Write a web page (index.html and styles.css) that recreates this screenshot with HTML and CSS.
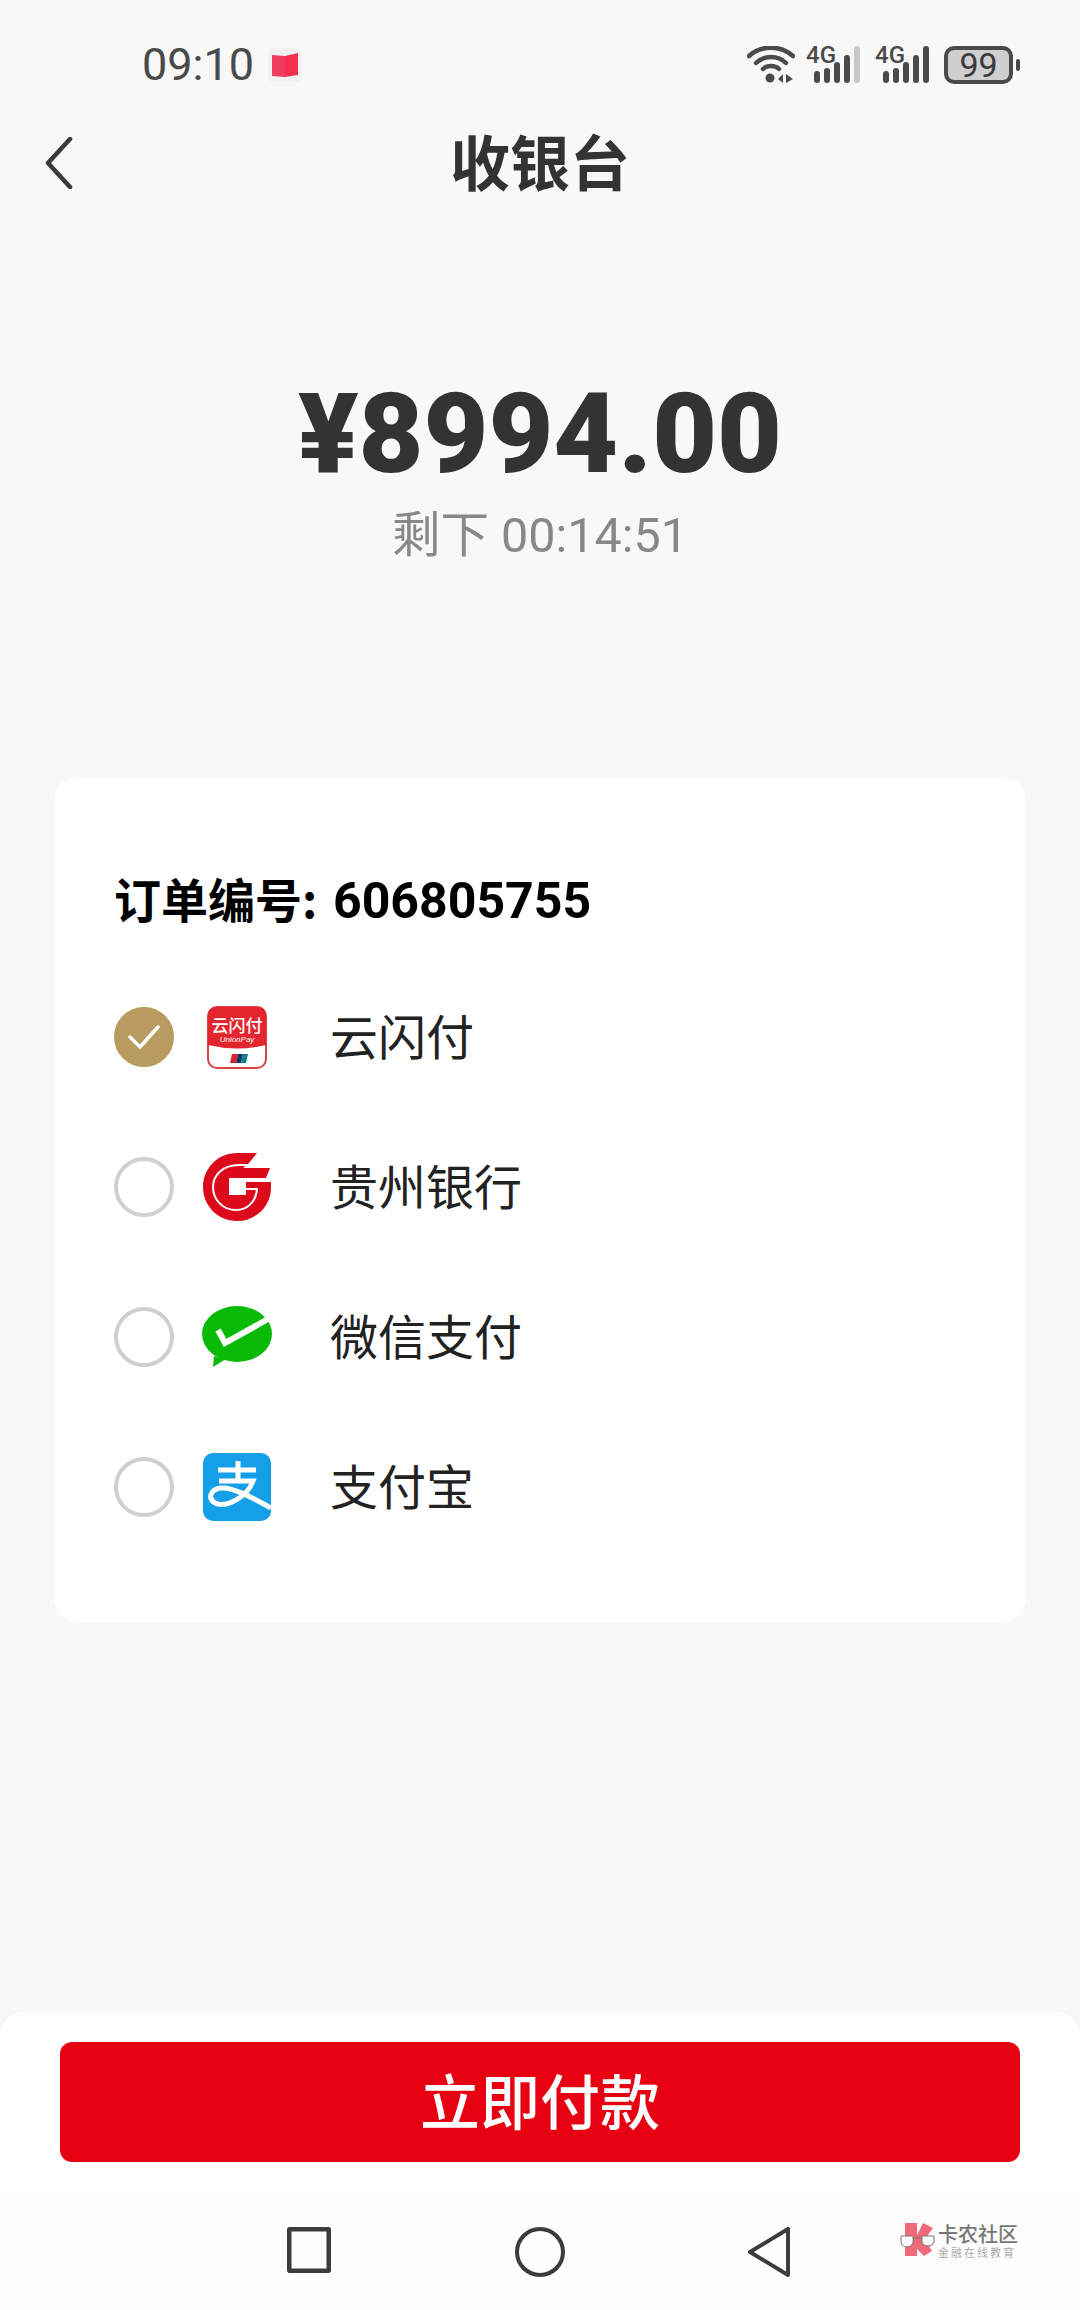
FILE: index.html
```html
<!DOCTYPE html>
<html lang="zh-CN">
<head>
    <meta charset="UTF-8">
    <title>收银台</title>
    <link rel="stylesheet" href="styles.css">
</head>
<body>
<!-- 状态栏 -->
<div class="status-bar">
    <div class="status-left">
        <span class="time">09:10</span>
        <span class="app-badge">
            <svg width="26" height="24" viewBox="0 0 26 24"><path d="M0 2 L13 3 V24 L0 23Z" fill="#ee3c5c"/><path d="M13 3 L26 0 V22 L13 24Z" fill="#f5304f"/></svg>
        </span>
    </div>
    <div class="status-right">
        <svg class="ic-wifi" width="48" height="38" viewBox="0 0 48 38">
            <path d="M2 10 C14 -1 34 -1 46 10" fill="none" stroke="#4a4a4a" stroke-width="4.5" stroke-linecap="round"/>
            <path d="M9 17 C17 9 31 9 39 17" fill="none" stroke="#4a4a4a" stroke-width="4.5" stroke-linecap="round"/>
            <path d="M16 23 C20 19 28 19 32 23" fill="none" stroke="#4a4a4a" stroke-width="4.5" stroke-linecap="round"/>
            <circle cx="23" cy="32" r="4.5" fill="#4a4a4a"/>
            <path d="M36 28 V37 L31 33Z M39 28 V37 L46 33Z" fill="#4a4a4a"/>
        </svg>
        <svg class="ic-signal" width="54" height="50" viewBox="0 -6 54 50">
            <text x="0" y="17" class="sig-text">4G</text>
            <rect x="8" y="25" width="6" height="12" rx="3" fill="#4a4a4a"/>
            <rect x="18" y="22" width="6" height="15" rx="3" fill="#4a4a4a"/>
            <rect x="28" y="16" width="6" height="21" rx="3" fill="#4a4a4a"/>
            <rect x="38" y="9" width="6" height="28" rx="3" fill="#4a4a4a"/>
            <rect x="48" y="0" width="6" height="37" rx="3" fill="#c8c8c8"/>
        </svg>
        <svg class="ic-signal" width="54" height="50" viewBox="0 -6 54 50">
            <text x="0" y="17" class="sig-text">4G</text>
            <rect x="8" y="25" width="6" height="12" rx="3" fill="#4a4a4a"/>
            <rect x="18" y="22" width="6" height="15" rx="3" fill="#4a4a4a"/>
            <rect x="28" y="16" width="6" height="21" rx="3" fill="#4a4a4a"/>
            <rect x="38" y="9" width="6" height="28" rx="3" fill="#4a4a4a"/>
            <rect x="48" y="0" width="6" height="37" rx="3" fill="#4a4a4a"/>
        </svg>
        <div class="battery">
            <div class="battery-body">99</div>
            <div class="battery-nub"></div>
        </div>
    </div>
</div>

<!-- 标题 -->
<div class="header">
    <svg class="back" width="28" height="52" viewBox="0 0 28 52"><path d="M25 2 L3 26 L25 50" fill="none" stroke="#3a3a3a" stroke-width="4.5" stroke-linecap="round" stroke-linejoin="round"/></svg>
    <h1 class="title">收银台</h1>
</div>

<!-- 金额 -->
<div class="amount">¥8994.00</div>
<div class="remain">剩下 00:14:51</div>

<!-- 支付方式 -->
<div class="card">
    <div class="order-no">订单编号: <span class="order-num">606805755</span></div>

    <div class="pay-row">
        <span class="radio checked">
            <svg width="32" height="26" viewBox="0 0 32 26"><path d="M2 13 L12 23 L30 3" fill="none" stroke="#fff" stroke-width="3.5" stroke-linecap="round" stroke-linejoin="round"/></svg>
        </span>
        <span class="pay-icon">
            <svg width="60" height="63" viewBox="0 0 60 63">
                <rect x="1" y="1" width="58" height="61" rx="9" fill="#fff" stroke="#d9434b" stroke-width="2"/>
                <path d="M1 10 Q1 1 10 1 H50 Q59 1 59 10 V39 Q30 46 1 39Z" fill="#e4252d"/>
                <text x="30" y="26" class="up-name">云闪付</text>
                <text x="30" y="36" class="up-sub">UnionPay</text>
                <path d="M25 48 H31 L29 57 H23Z" fill="#d9232e"/>
                <path d="M31 48 H36 L34 57 H29Z" fill="#14336b"/>
                <path d="M36 48 H41 L39 57 H34Z" fill="#0f7f8c"/>
            </svg>
        </span>
        <span class="pay-name">云闪付</span>
    </div>

    <div class="pay-row">
        <span class="radio"></span>
        <span class="pay-icon">
            <svg width="68" height="68" viewBox="0 0 68 68">
                <path d="M54 0 L46 10 L40 15 H67 L63 25 H43 V29 H68 V35 C68 53 53 68 34 68 C15 68 0 53 0 34 C0 15 15 0 34 0Z" fill="#dd0a1c"/>
                <path d="M26 25 H63 L62 29 H43 V42 H26Z" fill="#fff"/>
                <path d="M47 12 H36 C20 12 10 22 10 34 C10 47 20 57 33 57 C44 57 53 49 54 36 H43" fill="none" stroke="#fff" stroke-width="2"/>
            </svg>
        </span>
        <span class="pay-name">贵州银行</span>
    </div>

    <div class="pay-row">
        <span class="radio"></span>
        <span class="pay-icon">
            <svg width="70" height="62" viewBox="0 0 70 62">
                <ellipse cx="35" cy="28" rx="35" ry="28" fill="#09bb07"/>
                <path d="M12 50 L11 61 L24 53Z" fill="#09bb07"/>
                <path d="M16 24 L23 37 L66 13" fill="none" stroke="#fff" stroke-width="6" stroke-linejoin="miter"/>
            </svg>
        </span>
        <span class="pay-name">微信支付</span>
    </div>

    <div class="pay-row">
        <span class="radio"></span>
        <span class="pay-icon">
            <svg width="68" height="68" viewBox="0 0 68 68">
                <rect width="68" height="68" rx="10" fill="#149fe8"/>
                <path d="M15 17 H53 M35 8 V27 M16 28 H50 C44 45 22 55 12 50 C4 45 8 36 18 35 C30 34 48 44 68 55" fill="none" stroke="#fff" stroke-width="5"/>
            </svg>
        </span>
        <span class="pay-name">支付宝</span>
    </div>
</div>

<!-- 底部按钮 -->
<div class="bottom-bar">
    <button class="pay-btn">立即付款</button>
</div>

<!-- 导航栏 -->
<div class="nav-bar">
    <svg width="44" height="46" viewBox="0 0 44 46"><rect x="2" y="2" width="40" height="42" rx="2" fill="none" stroke="#3c3c3c" stroke-width="5"/></svg>
    <svg class="nav-home" width="50" height="50" viewBox="0 0 50 50"><circle cx="25" cy="25" r="23" fill="none" stroke="#3c3c3c" stroke-width="4"/></svg>
    <svg class="nav-back" width="44" height="50" viewBox="0 0 44 50"><path d="M41 2 V48 L3 25Z" fill="none" stroke="#3c3c3c" stroke-width="4" stroke-linejoin="round"/></svg>
    <div class="watermark">
        <svg width="36" height="36" viewBox="0 0 36 36">
            <path d="M5 0 H17 V33 H5Z" fill="#ee6a78"/>
            <path d="M17 12 L23 0 L33 5 L25 16 L32 28 L24 33 L17 26Z" fill="#ee6a78"/>
            <path d="M1 13 H13 V20 Q11 24 7 24 Q2 24 1 19Z M22 13 H34 V19 Q33 23 28 23 Q23 23 22 19Z M13 15 H22" fill="#fff" stroke="#777" stroke-width="1"/>
        </svg>
        <div class="wm-text">
            <div class="wm-name">卡农社区</div>
            <div class="wm-sub">金融在线教育</div>
        </div>
    </div>
</div>
</body>
</html>
```

FILE: styles.css
```css
* {
    box-sizing: border-box;
}

body {
    margin: 0;
    width: 1080px;
    height: 2310px;
    overflow: hidden;
    position: relative;
    display: flex;
    flex-direction: column;
    background-color: #f8f8f8;
    font-family: "Noto Sans CJK SC", "Noto Sans", sans-serif;
}

/* status bar */
.status-bar {
    height: 90px;
    padding: 40px 60px 0 142px;
    display: flex;
    justify-content: space-between;
}

.status-left {
    height: 50px;
    display: flex;
    align-items: center;
    gap: 14px;
}

.time {
    font-family: Roboto, sans-serif;
    font-size: 45px;
    line-height: 50px;
    color: #4a4a4a;
}

.app-badge {
    width: 34px;
    height: 34px;
    background-color: #f1f1f1;
    border-radius: 6px;
    display: flex;
    align-items: center;
    justify-content: center;
}

.status-right {
    height: 50px;
    display: flex;
    align-items: center;
    gap: 15px;
}

.ic-wifi {
    margin-right: -4px;
}

.sig-text {
    font-family: Roboto, sans-serif;
    font-size: 24px;
    font-weight: 500;
    fill: #4a4a4a;
}

.battery {
    display: flex;
    align-items: center;
    gap: 3px;
}

.battery-body {
    width: 69px;
    height: 38px;
    border: 4px solid #4a4a4a;
    border-radius: 10px;
    background-color: #cfcfcf;
    font-family: Roboto, sans-serif;
    font-size: 34px;
    line-height: 30px;
    text-align: center;
    color: #3a3a3a;
}

.battery-nub {
    width: 4px;
    height: 12px;
    border-radius: 2px;
    background-color: #4a4a4a;
}

/* header */
.header {
    height: 146px;
    padding-bottom: 8px;
    position: relative;
    display: flex;
    align-items: center;
    justify-content: center;
}

.back {
    position: absolute;
    left: 45px;
    top: 47px;
}

.title {
    margin: 0;
    font-size: 60px;
    font-weight: 700;
    color: #333;
}

/* amount */
.amount {
    margin-top: 133px;
    height: 130px;
    line-height: 130px;
    text-align: center;
    font-family: Roboto, sans-serif;
    font-size: 112px;
    font-weight: 900;
    color: #333;
}

.remain {
    margin-top: 7px;
    height: 60px;
    line-height: 60px;
    text-align: center;
    font-family: Roboto, "Noto Sans CJK SC", sans-serif;
    font-size: 48.5px;
    color: #888;
}

/* card */
.card {
    margin: 211px 54px 0;
    height: 845px;
    padding: 91px 60px 60px;
    background-color: #fff;
    border-radius: 24px;
}

.order-no {
    height: 60px;
    line-height: 60px;
    margin-bottom: 34px;
    font-size: 47px;
    font-weight: 700;
    color: #000;
}

.order-num {
    margin-left: 5px;
    font-family: Roboto, sans-serif;
    font-size: 50px;
}

.pay-row {
    height: 150px;
    display: flex;
    align-items: center;
}

.radio {
    width: 60px;
    height: 60px;
    border: 4px solid #d0d0d0;
    border-radius: 50%;
    display: flex;
    align-items: center;
    justify-content: center;
}

.radio.checked {
    background-color: #b89b5e;
    border-color: #b89b5e;
}

.pay-icon {
    width: 70px;
    margin-left: 28px;
    display: flex;
    justify-content: center;
}

.pay-name {
    margin-left: 58px;
    padding-bottom: 6px;
    font-size: 48px;
    color: #222;
}

.up-name {
    font-size: 17px;
    font-weight: 500;
    fill: #fff;
    text-anchor: middle;
}

.up-sub {
    font-family: "Liberation Sans", sans-serif;
    font-size: 8px;
    font-style: italic;
    fill: #fff;
    text-anchor: middle;
}

/* bottom */
.bottom-bar {
    margin-top: auto;
    height: 180px;
    padding: 30px 60px 0;
    background-color: #fff;
    border-radius: 24px 24px 0 0;
}

.pay-btn {
    width: 100%;
    height: 120px;
    padding: 0 0 8px;
    border: none;
    border-radius: 12px;
    background-color: #e60012;
    color: #fff;
    font-family: inherit;
    font-size: 60px;
    font-weight: 500;
}

/* nav */
.nav-bar {
    height: 118px;
    background-color: #fdfdfd;
    padding: 35px 0 0 287px;
    display: flex;
    align-items: flex-start;
    gap: 183px;
}

.nav-home {
    margin-left: 1px;
}

.nav-back {
    margin-left: -1px;
}

.watermark {
    position: absolute;
    left: 900px;
    top: 2223px;
    display: flex;
    gap: 2px;
}

.wm-name {
    font-size: 20px;
    line-height: 22px;
    font-weight: 500;
    color: #777;
}

.wm-sub {
    font-size: 11px;
    line-height: 14px;
    letter-spacing: 2px;
    color: #aaa;
}
```
